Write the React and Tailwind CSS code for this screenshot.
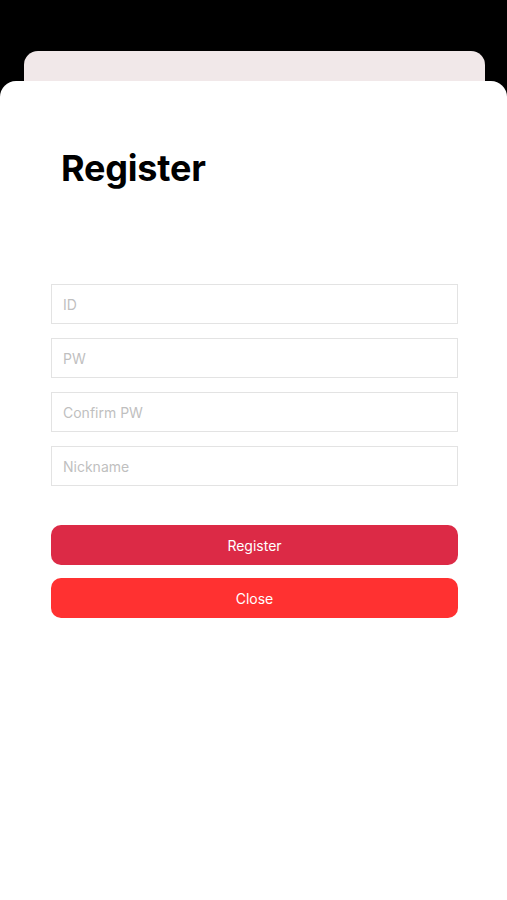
export default function App() {
  const font = { fontFamily: 'Inter, "Noto Sans", sans-serif' };
  return (
    <div className="w-[507px] h-[900px] bg-black overflow-hidden flex flex-col" style={font}>
      <div className="h-[51px] shrink-0" />
      <div className="ml-[24px] w-[461px] h-[40px] shrink-0 rounded-t-[14px] bg-[#f1e8e9]" />
      <div className="-mt-[10px] flex-1 bg-white rounded-t-[16px] relative">
        <div className="pl-[61px] pt-[66px]">
          <h1 className="text-[36px] leading-[42px] font-bold text-black tracking-[-0.2px]">Register</h1>
        </div>
        <div className="ml-[51px] w-[407px] mt-[95px] flex flex-col gap-[14px]">
          {["ID", "PW", "Confirm PW", "Nickname"].map((p) => (
            <input
              key={p}
              placeholder={p}
              className="h-[40px] w-full border border-[#e3e3e3] px-[11px] text-[14px] text-black placeholder:text-[#bfbfbf] outline-none"
            />
          ))}
        </div>
        <div className="ml-[51px] w-[407px] mt-[39px] flex flex-col gap-[13px]">
          <button className="h-[40px] w-full rounded-[10px] bg-[#dc2a46] text-white text-[14px]">Register</button>
          <button className="h-[40px] w-full rounded-[10px] bg-[#ff3131] text-white text-[14px]">Close</button>
        </div>
      </div>
    </div>
  );
}
